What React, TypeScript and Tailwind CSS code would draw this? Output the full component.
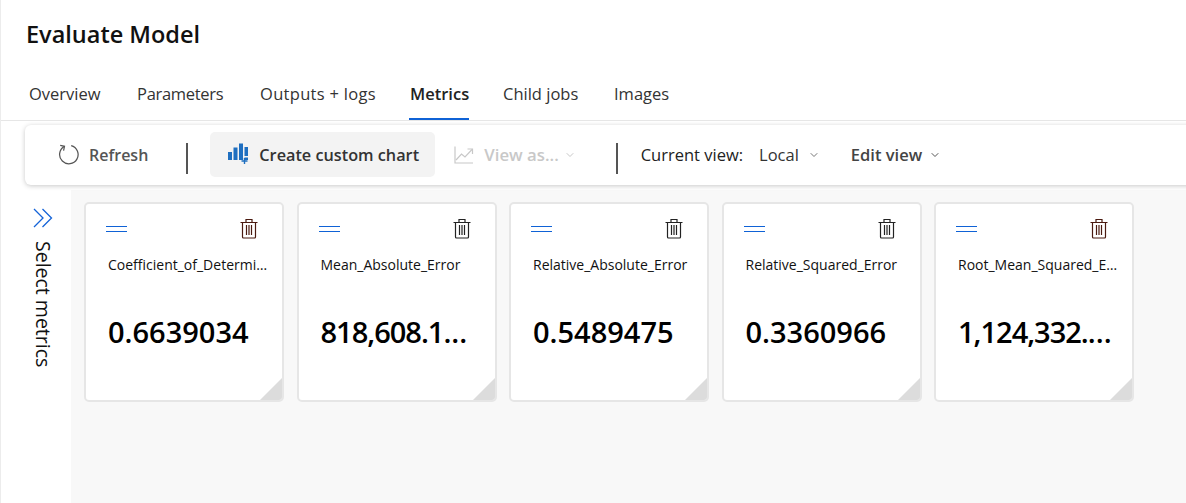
import { ChevronDown } from "lucide-react";

const FONT = "font-['Open_Sans','Noto_Sans',sans-serif]";

const tabs = [
  { label: "Overview", width: "w-[74px]", extra: "", active: false },
  { label: "Parameters", width: "w-[89px]", extra: "tracking-[-0.3px]", active: false },
  { label: "Outputs + logs", width: "w-[115px]", extra: "tracking-[0.3px]", active: false },
  { label: "Metrics", width: "w-[60px]", extra: "pl-[1px]", active: true },
  { label: "Child jobs", width: "w-[77px]", extra: "", active: false },
  { label: "Images", width: "w-[56px]", extra: "", active: false },
];

const metrics = [
  { name: "Coefficient_of_Determination", value: "0.6639034", cut: false, tint: true },
  { name: "Mean_Absolute_Error", value: "818,608.1", cut: true, tint: false },
  { name: "Relative_Absolute_Error", value: "0.5489475", cut: false, tint: false },
  { name: "Relative_Squared_Error", value: "0.3360966", cut: false, tint: false },
  { name: "Root_Mean_Squared_Error", value: "1,124,332.", cut: true, tint: true },
];

const TrashIcon = ({ tint }: { tint: boolean }) => (
  <svg width="18" height="21" viewBox="0 0 18 21" fill="none" stroke={tint ? "#4a1a10" : "#222"}>
    <path d="M0.5 4.5H17.5" strokeWidth="1.2" />
    <path d="M6 4V1.5H12V4" strokeWidth="1.2" />
    <path d="M2.5 4.5V19C2.5 19.6 3 20 3.5 20H14.5C15 20 15.5 19.6 15.5 19V4.5" strokeWidth="1.2" />
    <path d="M6.5 7V17M9 7V17M11.5 7V17" strokeWidth="1.2" />
  </svg>
);

const RefreshIcon = () => (
  <svg className="mb-[1px]" width="21" height="21" viewBox="0 0 22 22" fill="none" stroke="#555" strokeWidth="1.3">
    <path d="M13.8 1.6A9.7 9.7 0 1 1 6.5 2.6" />
    <path d="M6.8 7V2.4H2.2" transform="rotate(12 6.8 2.4)" />
  </svg>
);

const ChartIcon = () => (
  <svg className="mb-[2px]" width="21" height="21" viewBox="0 0 21 21" fill="#1f6fc0">
    <rect x="0" y="9" width="4" height="8" />
    <rect x="5.5" y="4.5" width="4" height="12.5" />
    <rect x="11" y="0.5" width="4" height="16.5" />
    <rect x="16.5" y="4" width="3.5" height="9" />
    <rect x="16.5" y="14.5" width="3.5" height="2.5" />
    <path d="M16.5 15V21M13.5 18H19.5" stroke="#1f6fc0" strokeWidth="1.4" fill="none" />
  </svg>
);

const LineChartIcon = () => (
  <svg width="20" height="18" viewBox="0 0 20 18" fill="none" stroke="#c8c8c8" strokeWidth="1.2">
    <path d="M1 0.5V17H19" />
    <path d="M2 14L7.5 8L11 11L18 3.5" />
    <path d="M13.5 3H18.5V8" />
  </svg>
);

const Separator = () => <div className="mt-[6px] h-[31px] w-[2px] bg-[#555555]" />;

const MetricCard = ({ name, value, cut, tint }: (typeof metrics)[number]) => (
  <div className="relative flex h-[200px] w-[200px] shrink-0 flex-col overflow-hidden rounded-[5px] border-2 border-[#e6e6e6] bg-white pl-[21px] pr-[12px]">
    <div className="flex items-center justify-between pr-[12px] pt-[14px]">
      <div className="-ml-[1px] h-[6px] w-[21px] border-y border-[#0f62d6]" />
      <TrashIcon tint={tint} />
    </div>
    <div className="mt-[16px] truncate pl-[1px] text-[14px] leading-[20px] text-[#111]">{name}</div>
    <div className="mt-[38px] whitespace-nowrap pl-[1px] text-[29px] font-semibold leading-[38px] text-black">
      {cut ? <span className="tracking-[-1px]">{value}</span> : value}
      {cut ? "..." : ""}
    </div>
    <div className="absolute bottom-0 right-0 h-0 w-0 border-b-[22px] border-l-[22px] border-b-[#dcdcdc] border-l-transparent" />
  </div>
);

export default function App() {
  return (
    <div className={`${FONT} flex h-[503px] w-[1186px] flex-col overflow-hidden border-l border-[#ececec] bg-white`}>
      <h1 className="pl-[25px] pt-[16px] text-[23.5px] font-semibold leading-[36px] text-[#111]">Evaluate Model</h1>

      <div className="mt-[18px] flex h-[51px] gap-[34px] border-b border-[#e6e6e6] pl-[28px]">
        {tabs.map((tab) => (
          <div
            key={tab.label}
            className={
              tab.active
                ? `${tab.width} ${tab.extra} flex items-center whitespace-nowrap border-b-2 border-[#0f62d6] pb-[2px] pt-[2px] text-[16.5px] font-semibold text-[#222]`
                : `${tab.width} ${tab.extra} flex items-center whitespace-nowrap pb-[2px] text-[16.5px] text-[#333]`
            }
          >
            {tab.label}
          </div>
        ))}
      </div>

      <div className="relative z-10 ml-[24px] mt-[4px] flex h-[60px] w-[1200px] items-center rounded-l-[6px] bg-white pl-[33px] shadow-[0_1px_5px_rgba(0,0,0,0.22)]">
        <RefreshIcon />
        <span className="ml-[10px] text-[16px] font-semibold text-[#555]">Refresh</span>
        <div className="ml-[38px]"><Separator /></div>
        <div className="mb-[2px] ml-[22px] flex h-[45px] w-[225px] items-center rounded-[5px] bg-[#f3f3f3] pl-[18px] pt-[1px]">
          <ChartIcon />
          <span className="ml-[10px] mt-[2px] text-[16.25px] font-semibold text-[#333]">Create custom chart</span>
        </div>
        <div className="ml-[19px]"><LineChartIcon /></div>
        <span className="ml-[10px] text-[16.75px] font-semibold text-[#c8c8c8]">View as...</span>
        <ChevronDown className="ml-[5px] text-[#c8c8c8]" size={12} />
        <div className="ml-[40px]"><Separator /></div>
        <span className="ml-[23px] text-[16.5px] text-[#222]">Current view:</span>
        <span className="ml-[16px] text-[16.5px] text-[#333]">Local</span>
        <ChevronDown className="ml-[9px] text-[#777]" size={12} />
        <span className="ml-[31px] text-[16.5px] font-semibold text-[#444]">Edit view</span>
        <ChevronDown className="ml-[7px] text-[#555]" size={12} />
      </div>

      <div className="mt-[5px] flex flex-1">
        <div className="flex w-[70px] flex-col items-start bg-white pl-[32px] pt-[18px]">
          <svg width="20" height="20" viewBox="0 0 20 20" fill="none" stroke="#1463d8" strokeWidth="1.3">
            <path d="M1 1L10 10L1 19M9.5 1L18.5 10L9.5 19" />
          </svg>
          <span className="mt-[13px] text-[19.5px] font-medium leading-[20px] text-[#111] [writing-mode:vertical-rl]">Select metrics</span>
        </div>
        <div className="flex flex-1 gap-[12.5px] bg-[#f8f8f8] pl-[13px] pt-[12px]">
          {metrics.map((m) => (
            <MetricCard key={m.name} {...m} />
          ))}
        </div>
      </div>
    </div>
  );
}
